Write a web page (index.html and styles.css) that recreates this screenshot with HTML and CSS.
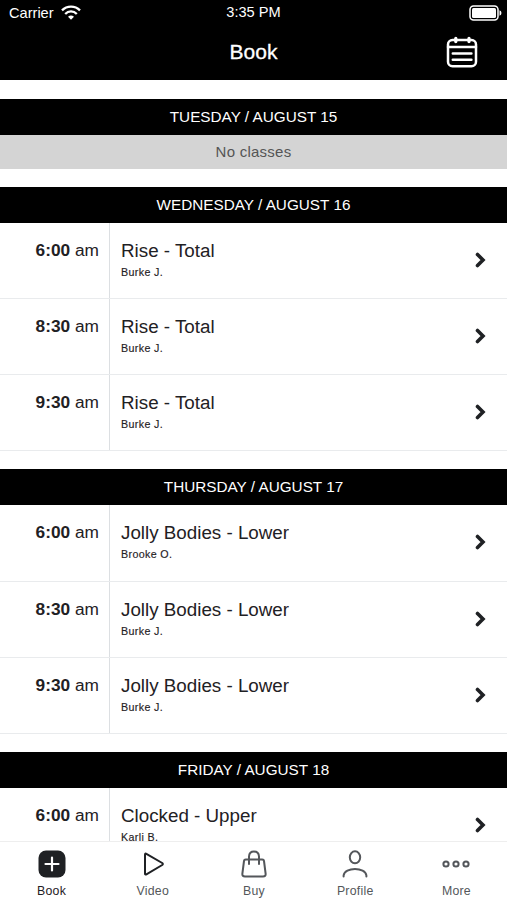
FILE: index.html
```html
<!DOCTYPE html>
<html lang="en">
<head>
  <meta charset="UTF-8" />
  <meta name="viewport" content="width=device-width, initial-scale=1" />
  <title>Book</title>
  <link rel="stylesheet" href="styles.css">
</head>
<body>
  <header class="header">
    <div class="status-bar">
      <div class="carrier">
        <span>Carrier</span>
        <svg class="wifi" viewBox="0 0 20 15" fill="none" stroke="currentColor" stroke-width="2.3">
          <path d="M1 5.4C6 .3 14 .3 19 5.4M4.200 9C7.500 5.600 12.500 5.600 15.800 9" />
          <path d="M7 11.800Q10 9.300 13 11.800L10 14.800Z" fill="currentColor" stroke="none" />
        </svg>
      </div>
      <span class="clock">3:35 PM</span>
      <svg class="battery" viewBox="0 0 33 16" fill="none">
        <rect x="1" y="1" width="28" height="14" rx="3.500" stroke="#fff" stroke-width="1.500" />
        <rect x="3" y="3" width="24" height="10" rx="1.500" fill="#fff" />
        <path d="M30.500 5.200q2 .8 2 2.800t-2 2.800z" fill="#fff" />
      </svg>
    </div>
    <div class="nav-bar">
      <h1>Book</h1>
      <svg class="calendar" viewBox="0 0 32 32" fill="none" stroke="currentColor" stroke-width="2.500" stroke-linecap="round">
        <rect x="2" y="4" width="28" height="26.300" rx="4.500" />
        <path d="M2 11h28M6.800 17.500h18.600M6.800 23.800h18.600" />
        <path d="M9.800 2.500v3M23 2.500v3" stroke-width="3.300" />
      </svg>
    </div>
  </header>

  <main class="schedule">
    <section class="day">
      <h2>TUESDAY / AUGUST 15</h2>
      <p class="empty">No classes</p>
    </section>

    <section class="day">
      <h2>WEDNESDAY / AUGUST 16</h2>
      <div class="row">
        <div class="time"><b>6:00</b> am</div>
        <div class="info"><h3>Rise - Total</h3><p>Burke J.</p></div>
        <svg class="arrow" viewBox="0 0 11 16"><path d="M2.500 2.500l5.500 5.500-5.500 5.500" /></svg>
      </div>
      <div class="row">
        <div class="time"><b>8:30</b> am</div>
        <div class="info"><h3>Rise - Total</h3><p>Burke J.</p></div>
        <svg class="arrow" viewBox="0 0 11 16"><path d="M2.500 2.500l5.500 5.500-5.500 5.500" /></svg>
      </div>
      <div class="row">
        <div class="time"><b>9:30</b> am</div>
        <div class="info"><h3>Rise - Total</h3><p>Burke J.</p></div>
        <svg class="arrow" viewBox="0 0 11 16"><path d="M2.500 2.500l5.500 5.500-5.500 5.500" /></svg>
      </div>
    </section>

    <section class="day">
      <h2>THURSDAY / AUGUST 17</h2>
      <div class="row">
        <div class="time"><b>6:00</b> am</div>
        <div class="info"><h3>Jolly Bodies - Lower</h3><p>Brooke O.</p></div>
        <svg class="arrow" viewBox="0 0 11 16"><path d="M2.500 2.500l5.500 5.500-5.500 5.500" /></svg>
      </div>
      <div class="row">
        <div class="time"><b>8:30</b> am</div>
        <div class="info"><h3>Jolly Bodies - Lower</h3><p>Burke J.</p></div>
        <svg class="arrow" viewBox="0 0 11 16"><path d="M2.500 2.500l5.500 5.500-5.500 5.500" /></svg>
      </div>
      <div class="row">
        <div class="time"><b>9:30</b> am</div>
        <div class="info"><h3>Jolly Bodies - Lower</h3><p>Burke J.</p></div>
        <svg class="arrow" viewBox="0 0 11 16"><path d="M2.500 2.500l5.500 5.500-5.500 5.500" /></svg>
      </div>
    </section>

    <section class="day">
      <h2>FRIDAY / AUGUST 18</h2>
      <div class="row">
        <div class="time"><b>6:00</b> am</div>
        <div class="info"><h3>Clocked - Upper</h3><p>Karli B.</p></div>
        <svg class="arrow" viewBox="0 0 11 16"><path d="M2.500 2.500l5.500 5.500-5.500 5.500" /></svg>
      </div>
    </section>
  </main>

  <nav class="tab-bar">
    <a class="tab active">
      <svg viewBox="0 0 28 28" fill="none">
        <rect x=".5" y=".5" width="27" height="27" rx="7.500" fill="#1f2124" />
        <path d="M14 7.500v13M7.500 14h13" stroke="#fff" stroke-width="2.200" stroke-linecap="round" />
      </svg>
      <span>Book</span>
    </a>
    <a class="tab">
      <svg viewBox="0 0 28 28" fill="none" stroke="#1f2124" stroke-width="2" stroke-linejoin="round">
        <path d="M6 4.700Q6 3 7.400 3.900L23.200 13Q24.500 14 23.200 15L7.400 24.300Q6 25.100 6 23.500Z" />
      </svg>
      <span>Video</span>
    </a>
    <a class="tab">
      <svg viewBox="0 0 28 28" fill="none" stroke="currentColor" stroke-width="2" stroke-linecap="round">
        <path d="M5.700 9.500h16.600q1.500 0 1.700 1.500l1.600 12.500q.4 3-2.600 3H5q-3 0-2.600-3L4 11Q4.200 9.500 5.700 9.500z" />
        <path d="M9 14V6.500Q9.300 1.500 14 1.500T19 6.500V14" />
      </svg>
      <span>Buy</span>
    </a>
    <a class="tab">
      <svg viewBox="0 0 28 28" fill="none" stroke="currentColor" stroke-width="2" stroke-linecap="round">
        <ellipse cx="14" cy="7.300" rx="5.200" ry="6" />
        <path d="M2.600 26.500v-1C3.500 16.800 24.500 16.800 25.400 25.500v1" />
      </svg>
      <span>Profile</span>
    </a>
    <a class="tab">
      <svg viewBox="0 0 28 28" fill="none" stroke="currentColor" stroke-width="2">
        <circle cx="4" cy="14" r="2.600" />
        <circle cx="14" cy="14" r="2.600" />
        <circle cx="24" cy="14" r="2.600" />
      </svg>
      <span>More</span>
    </a>
  </nav>
</body>
</html>
```
FILE: styles.css
```css
* {
  margin: 0;
  padding: 0;
  box-sizing: border-box;
}
body {
  font-family: "Liberation Sans", Arial, sans-serif;
  background: #fff;
  color: #1f2124;
  height: 100vh;
  display: flex;
  flex-direction: column;
  overflow: hidden;
}
svg {
  display: block;
  flex-shrink: 0;
}
.header {
  height: 80.3px;
  flex-shrink: 0;
  background: #000;
  color: #fff;
}
.status-bar {
  height: 25px;
  padding: 0 5px 0 9px;
  display: grid;
  grid-template-columns: 1fr auto 1fr;
  align-items: center;
  font-size: 14.6px;
}
.carrier {
  display: flex;
  align-items: center;
  gap: 7px;
}
.clock {
  padding: 0 4px 2px 0;
}
.battery {
  width: 33px;
  height: 16px;
  justify-self: end;
}
.wifi {
  width: 20px;
  height: 15px;
}
.nav-bar {
  height: 54px;
  padding: 0 29px;
  display: grid;
  grid-template-columns: 1fr auto 1fr;
  align-items: center;
}
.nav-bar h1 {
  grid-column: 2;
  font-size: 21px;
  font-weight: normal;
  -webkit-text-stroke: 0.3px;
}
.calendar {
  width: 32px;
  height: 32px;
  justify-self: end;
}
.schedule {
  flex: 1;
  min-height: 0;
  overflow: hidden;
}
.day {
  margin-top: 18.3px;
}
.day h2 {
  height: 36px;
  line-height: 35px;
  background: #000;
  color: #fff;
  text-align: center;
  font-size: 15.3px;
  font-weight: normal;
}
.empty {
  height: 34px;
  line-height: 34px;
  background: #d4d4d4;
  color: #555;
  text-align: center;
  font-size: 15px;
  letter-spacing: 0.25px;
}
.row {
  height: 76.1px;
  display: flex;
  border-bottom: 1px solid #e9ebed;
}
.time {
  width: 110px;
  padding: 17px 10px 0 0;
  border-right: 1px solid #dcdfe2;
  text-align: right;
  font-size: 17.3px;
  line-height: 20px;
}
.info {
  flex: 1;
  padding: 17px 0 0 11px;
}
.info h3 {
  font-size: 18.8px;
  font-weight: normal;
  line-height: 22px;
}
.info p {
  margin-top: 4px;
  font-size: 10.7px;
  line-height: 13px;
  letter-spacing: 0.35px;
  -webkit-text-stroke: 0.15px;
}
.arrow {
  width: 11px;
  height: 16px;
  margin: 29px 21px 0 0;
  fill: none;
  stroke: #1f2124;
  stroke-width: 3.6;
  stroke-linecap: round;
}
.tab-bar {
  height: 59.5px;
  flex-shrink: 0;
  padding: 8.5px 0 0 1px;
  border-top: 1px solid #eee;
  background: #fff;
  display: flex;
}
.tab {
  flex: 1;
  display: flex;
  flex-direction: column;
  align-items: center;
  gap: 6px;
  color: #54575b;
  font-size: 12.3px;
  line-height: 14px;
  letter-spacing: 0.25px;
}
.tab svg {
  width: 28px;
  height: 28px;
}
.tab.active {
  color: #1f2124;
}
```
